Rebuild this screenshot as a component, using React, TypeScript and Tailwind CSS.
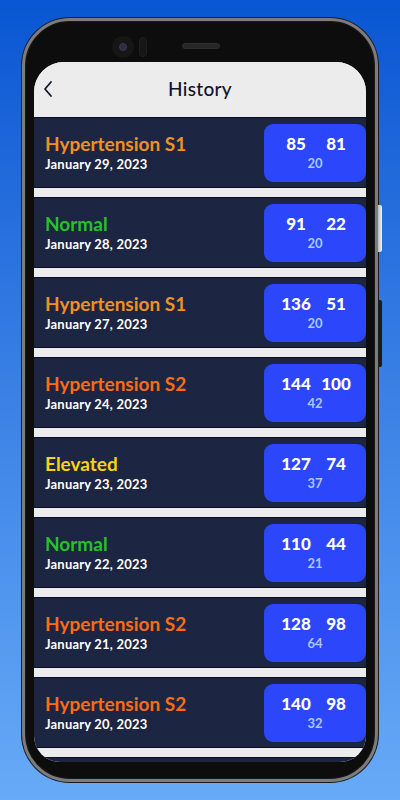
import React from 'react';

type Reading = {
  status: string;
  date: string;
  sys: number;
  dia: number;
  pulse: number;
};

const readings: Reading[] = [
  { status: 'Hypertension S1', date: 'January 29, 2023', sys: 85, dia: 81, pulse: 20 },
  { status: 'Normal', date: 'January 28, 2023', sys: 91, dia: 22, pulse: 20 },
  { status: 'Hypertension S1', date: 'January 27, 2023', sys: 136, dia: 51, pulse: 20 },
  { status: 'Hypertension S2', date: 'January 24, 2023', sys: 144, dia: 100, pulse: 42 },
  { status: 'Elevated', date: 'January 23, 2023', sys: 127, dia: 74, pulse: 37 },
  { status: 'Normal', date: 'January 22, 2023', sys: 110, dia: 44, pulse: 21 },
  { status: 'Hypertension S2', date: 'January 21, 2023', sys: 128, dia: 98, pulse: 64 },
  { status: 'Hypertension S2', date: 'January 20, 2023', sys: 140, dia: 98, pulse: 32 },
];

const statusColor: Record<string, string> = {
  'Hypertension S1': 'text-[#f0911f]',
  'Hypertension S2': 'text-[#ff6b12]',
  Normal: 'text-[#27c12a]',
  Elevated: 'text-[#f6d313]',
};

const HistoryRow: React.FC<{ item: Reading }> = ({ item }) => (
  <div className="h-[71px] mb-[9px] bg-[#1c2541] border-y border-[#0b1020] flex items-center justify-between">
    <div className="pl-[11px] flex flex-col">
      <span className={`text-[19px] leading-[22px] font-bold ${statusColor[item.status]}`}>
        {item.status}
      </span>
      <span className="text-[13px] leading-[18px] font-bold text-white tracking-[0.2px]">{item.date}</span>
    </div>
    <div className="w-[102px] h-[58px] rounded-[9px] bg-[#2c46fb] flex flex-col items-center justify-center">
      <div className="flex pl-[2px]">
        <span className="w-[40px] text-center text-[17px] leading-[20px] font-black text-white">{item.sys}</span>
        <span className="w-[40px] text-center text-[17px] leading-[20px] font-black text-white">{item.dia}</span>
      </div>
      <span className="text-[13px] leading-[18px] font-bold text-[#adc6ff]">{item.pulse}</span>
    </div>
  </div>
);

export default function App() {
  return (
    <div
      className="w-[400px] h-[800px] overflow-hidden bg-gradient-to-b from-[#0856d3] to-[#67aaf7] flex justify-center pt-[18px]"
      style={{ fontFamily: 'Lato, "Noto Sans", sans-serif' }}
    >
      {/* phone body */}
      <div className="relative w-[356px] h-[764px] rounded-[48px] bg-[#0d0d0d] border-[3px] border-[#7c7c7c] shadow-[0_0_0_1px_#1c1c1c,inset_0_0_0_1px_#1a1a1a] pt-[41px] px-[9px]">
        {/* side buttons */}
        <div className="absolute right-[-7px] top-[184px] w-[4px] h-[47px] rounded-r-[2px] bg-gradient-to-r from-[#bdbdbd] to-[#f2f2f2]" />
        <div className="absolute right-[-7px] top-[279px] w-[4px] h-[67px] rounded-r-[2px] bg-[#1b1b1b]" />

        {/* camera, sensor, speaker */}
        <div className="absolute left-[87px] top-[15px] w-[22px] h-[22px] rounded-full bg-[#161616] flex items-center justify-center">
          <div className="w-[8px] h-[8px] rounded-full bg-[#2b2d45] border border-[#3a3a4a]" />
        </div>
        <div className="absolute left-[114px] top-[16px] w-[8px] h-[20px] rounded-full bg-[#161616] border border-[#1f1f1f]" />
        <div className="absolute left-[157px] top-[22px] w-[38px] h-[6px] rounded-full bg-[#262626] border border-[#2e2e2e]" />

        {/* screen */}
        <div className="w-[332px] h-[700px] rounded-t-[30px] rounded-b-[26px] overflow-hidden bg-[#ececec]">
          <div className="relative h-[55px] bg-[#ececec] flex items-center justify-center">
            <svg
              className="absolute left-[8px] top-[18px]"
              width="14"
              height="18"
              viewBox="0 0 14 18"
              fill="none"
              stroke="#111827"
              strokeWidth="1.8"
              strokeLinecap="round"
              strokeLinejoin="round"
            >
              <path d="M9 2 L3 9 L9 16" />
            </svg>
            <span className="text-[19px] font-medium text-[#10142a] tracking-[0.3px]">History</span>
          </div>
          <div className="flex flex-col">
            {readings.map((r, i) => (
              <HistoryRow key={i} item={r} />
            ))}
            {/* next row, scrolled mostly out of view */}
            <div className="h-[71px] bg-[#1c2541] border-t border-[#0b1020] flex justify-end pt-[6px]">
              <div className="w-[102px] h-[58px] rounded-[9px] bg-[#2c46fb]" />
            </div>
          </div>
        </div>
      </div>
    </div>
  );
}
